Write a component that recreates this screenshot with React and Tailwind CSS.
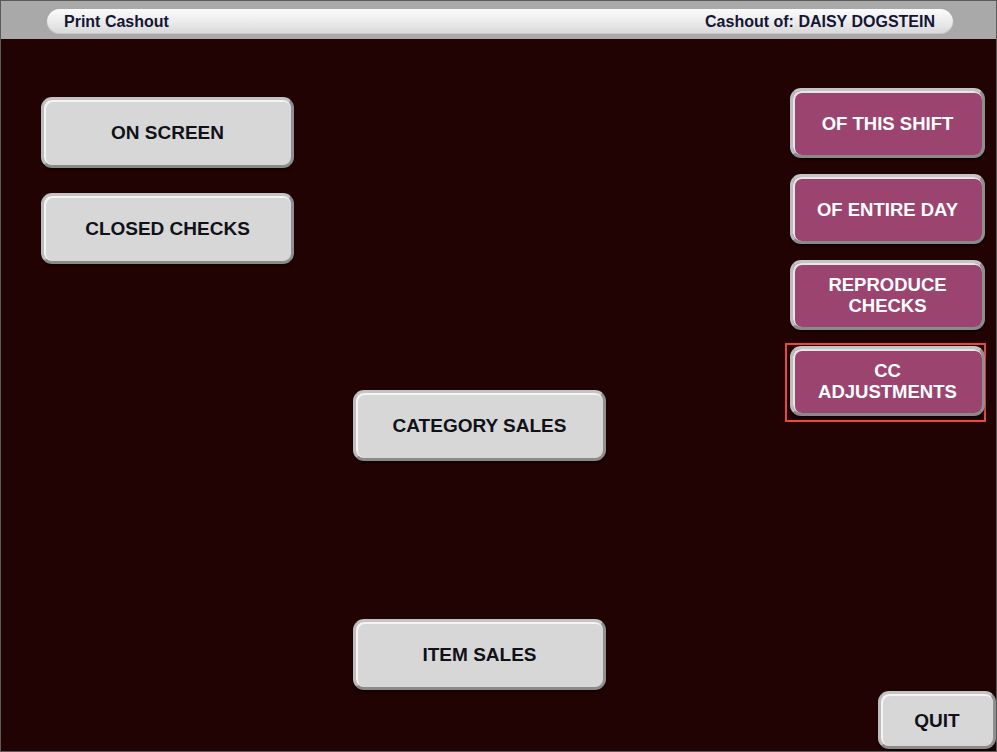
const GrayButton = ({ label, className = "" }) => (
  <button
    className={`flex items-center justify-center rounded-[11px] border-[3px] border-t-[#c4c4c4] border-l-[#bcbcbc] border-r-[#8f8f8f] border-b-[#8a8a8a] bg-[#d7d7d7] text-[19px] font-bold leading-[21px] text-[#111118] shadow-[inset_1px_1px_0_1px_#f4f4f4,0_2px_2px_rgba(0,0,0,0.5)] ${className}`}
  >
    {label}
  </button>
);

const PurpleButton = ({ lines }) => (
  <button className="flex h-[70px] w-[195px] flex-col items-center justify-center rounded-[11px] border-[3px] border-t-[#c4c4c4] border-l-[#bcbcbc] border-r-[#8f8f8f] border-b-[#8a8a8a] bg-[#9c4470] text-[18.5px] font-bold leading-[21px] text-white shadow-[inset_1px_1px_0_1px_#e6e6e6,0_2px_2px_rgba(0,0,0,0.5)]">
    {lines.map((l) => (
      <span key={l}>{l}</span>
    ))}
  </button>
);

export default function App() {
  return (
    <div
      className="h-[752px] w-[997px] overflow-hidden border border-[#5a5a5a] bg-[#210303]"
      style={{ fontFamily: '"Liberation Sans", Arial, sans-serif' }}
    >
      {/* title bar */}
      <div className="flex h-[38px] items-start bg-[#a9a9a9] pl-[46px] pr-[43px] pt-[8px]">
        <div className="flex h-[25px] flex-1 items-center justify-between rounded-full bg-gradient-to-b from-[#fbfbfb] via-[#ececec] to-[#d8d8d8] pl-[17px] pr-[18px] text-[16px] font-bold text-[#141634] shadow-[inset_0_-1px_0_#c8c8c8]">
          <span>Print Cashout</span>
          <span>Cashout of: DAISY DOGSTEIN</span>
        </div>
      </div>

      {/* main area */}
      <div className="flex h-[710px] pl-[40px]">
        <div className="flex w-[253px] flex-col gap-[25px] pt-[58px]">
          <GrayButton label="ON SCREEN" className="h-[71px] w-[253px]" />
          <GrayButton label="CLOSED CHECKS" className="h-[71px] w-[253px]" />
        </div>

        <div className="ml-[59px] flex w-[253px] flex-col gap-[158px] pt-[351px]">
          <GrayButton label="CATEGORY SALES" className="h-[71px] w-[253px]" />
          <GrayButton label="ITEM SALES" className="h-[71px] w-[253px]" />
        </div>

        <div className="ml-auto flex w-[206px] flex-col pt-[49px]">
          <div className="flex flex-col gap-[16px]">
            <PurpleButton lines={["OF THIS SHIFT"]} />
            <PurpleButton lines={["OF ENTIRE DAY"]} />
            <PurpleButton lines={["REPRODUCE", "CHECKS"]} />
            <div className="-mb-[6px] -ml-[5px] -mr-[1px] -mt-[3px] w-[201px] border-2 border-[#e8483f] pb-[4px] pl-[3px] pt-[1px]">
              <PurpleButton lines={["CC", "ADJUSTMENTS"]} />
            </div>
          </div>
          <GrayButton label="QUIT" className="mt-auto h-[58px] w-[118px] self-end" />
        </div>
      </div>
    </div>
  );
}
